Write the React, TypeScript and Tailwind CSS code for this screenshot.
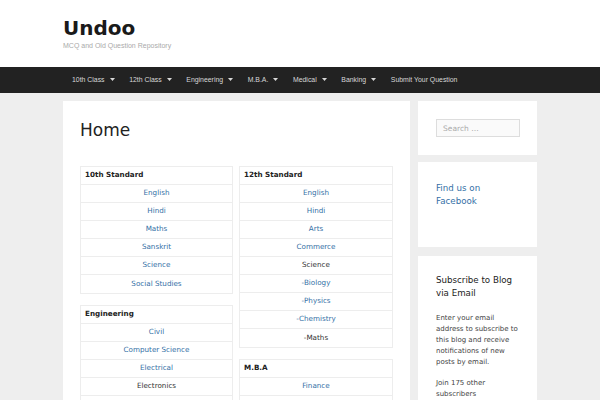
import React from "react";

type Row = { t: string; link?: boolean };

const Caret = () => (
  <svg width="5" height="3" viewBox="0 0 5 3" className="ml-[5px]">
    <path d="M0 0H5L2.5 3z" fill="#d8d8d8" />
  </svg>
);

const navItems: { t: string; caret: boolean }[] = [
  { t: "10th Class", caret: true },
  { t: "12th Class", caret: true },
  { t: "Engineering", caret: true },
  { t: "M.B.A.", caret: true },
  { t: "Medical", caret: true },
  { t: "Banking", caret: true },
  { t: "Submit Your Question", caret: false },
];

const Table = ({ title, rows }: { title: string; rows: Row[] }) => (
  <div className="border border-[#ededed] flex flex-col">
    <div className="h-[18px] flex items-center pl-[4px] font-bold text-[#222] border-b border-[#ededed]">
      {title}
    </div>
    {rows.map((r, i) => (
      <div
        key={i}
        className={
          "h-[18px] flex items-center justify-center border-[#ededed] " +
          (i < rows.length - 1 ? "border-b " : "") +
          (r.link === false ? "text-[#333]" : "text-[#3470a6]")
        }
      >
        {r.t}
      </div>
    ))}
  </div>
);

export default function App() {
  return (
    <div
      className="w-[600px] h-[400px] overflow-hidden bg-[#eeeeee]"
      style={{ fontFamily: '"DejaVu Sans", sans-serif' }}
    >
      <header className="h-[67px] bg-white pl-[63px] pt-[16px]">
        <div className="text-[20px] leading-[24px] font-bold text-[#1a1a1a]">Undoo</div>
        <div
          className="mt-[1px] text-[7px] leading-[10px] text-[#aaaaaa]"
          style={{ fontFamily: '"Liberation Sans", sans-serif' }}
        >
          MCQ and Old Question Repository
        </div>
      </header>
      <nav
        className="h-[26px] bg-[#222222] flex items-center pl-[64.7px] text-[6.9px] text-[#d8d8d8]"
        style={{ fontFamily: '"Liberation Sans", sans-serif' }}
      >
        {navItems.map((n) => (
          <div key={n.t} className="flex items-center px-[7.3px]">
            <span>{n.t}</span>
            {n.caret && <Caret />}
          </div>
        ))}
      </nav>
      <div className="flex gap-[8px] pl-[63px] pt-[8px] items-start">
        <main className="w-[347px] h-[320px] bg-white px-[17px] pt-[18px]">
          <h1 className="text-[17px] leading-[22px] text-[#222]">Home</h1>
          <div className="mt-[25px] flex gap-[6px] text-[7.2px]">
            <div className="w-[153px] flex flex-col gap-[11px]">
              <Table
                title="10th Standard"
                rows={[
                  { t: "English" },
                  { t: "Hindi" },
                  { t: "Maths" },
                  { t: "Sanskrit" },
                  { t: "Science" },
                  { t: "Social Studies" },
                ]}
              />
              <Table
                title="Engineering"
                rows={[
                  { t: "Civil" },
                  { t: "Computer Science" },
                  { t: "Electrical" },
                  { t: "Electronics", link: false },
                  { t: "" },
                ]}
              />
            </div>
            <div className="w-[154px] flex flex-col gap-[11px]">
              <Table
                title="12th Standard"
                rows={[
                  { t: "English" },
                  { t: "Hindi" },
                  { t: "Arts" },
                  { t: "Commerce" },
                  { t: "Science", link: false },
                  { t: "-Biology" },
                  { t: "-Physics" },
                  { t: "-Chemistry" },
                  { t: "-Maths", link: false },
                ]}
              />
              <Table title="M.B.A" rows={[{ t: "Finance" }, { t: "" }]} />
            </div>
          </div>
        </main>
        <aside className="w-[119px] flex flex-col">
          <div className="h-[54px] bg-white px-[18px] pt-[18px]">
            <input
              readOnly
              placeholder="Search …"
              className="block w-[84px] h-[18px] border border-[#dddddd] bg-[#fafafa] px-[6px] text-[7.5px] text-[#333] placeholder:text-[#aaaaaa] outline-none"
            />
          </div>
          <div className="mt-[7px] h-[85px] bg-white px-[18px] pt-[20px] text-[8.7px] leading-[13px] text-[#3470a6]">
            Find us on
            <br />
            Facebook
          </div>
          <div className="mt-[9px] h-[160px] bg-white px-[18px] pt-[18px]">
            <div className="text-[8.7px] leading-[13px] text-[#222]">
              Subscribe to Blog via Email
            </div>
            <p className="mt-[13px] text-[7px] leading-[11px] text-[#444]">
              Enter your email address to subscribe to this blog and receive notifications of new posts by email.
            </p>
            <p className="mt-[10px] text-[7px] leading-[11px] text-[#444]">
              Join 175 other subscribers
            </p>
          </div>
        </aside>
      </div>
    </div>
  );
}
